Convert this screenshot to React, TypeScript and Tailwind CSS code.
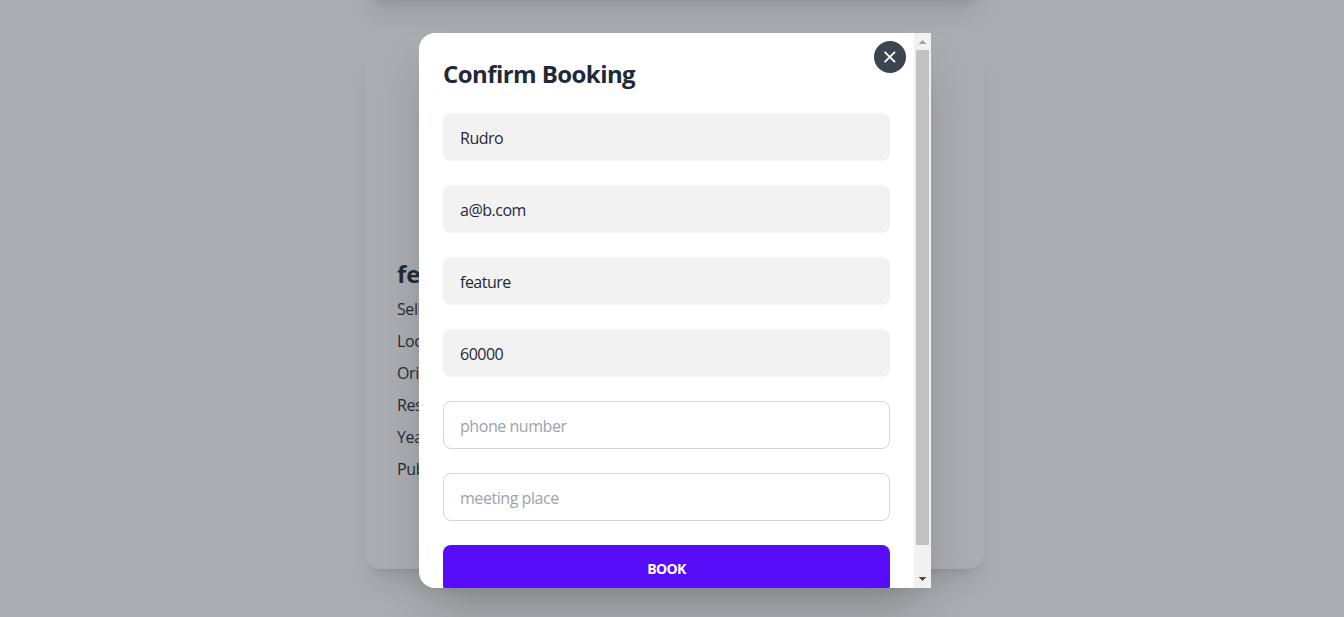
import React from "react";

const fieldBase =
  "block h-12 w-full rounded-lg px-4 pt-px text-[16px] outline-none border text-[#1f2937]";

function Field({ value, placeholder }: { value?: string; placeholder?: string }) {
  return value ? (
    <input
      readOnly
      value={value}
      className={`${fieldBase} border-[#f2f2f2] bg-[#f2f2f2] tracking-[-0.5px]`}
    />
  ) : (
    <input
      placeholder={placeholder}
      className={`${fieldBase} border-[#d2d4d7] bg-white tracking-[-0.45px] placeholder:text-[#9ca3af]`}
    />
  );
}

function Scrollbar() {
  return (
    <div className="flex w-[17px] shrink-0 flex-col items-center bg-[#f1f1f1]">
      <div className="flex h-[17px] w-full items-center justify-center">
        <svg width="7" height="4" viewBox="0 0 7 4" shapeRendering="crispEdges">
          <path d="M3 0h1v1h1v1h1v1h1v1H0V3h1V2h1V1h1z" fill="#a3a3a3" />
        </svg>
      </div>
      <div className="h-[495px] w-[13px] bg-[#c1c1c1]" />
      <div className="mt-auto flex h-[19px] w-full items-center justify-center">
        <svg width="7" height="4" viewBox="0 0 7 4" shapeRendering="crispEdges">
          <path d="M0 0h7v1H6v1H5v1H4v1H3V3H2V2H1V1H0z" fill="#505050" />
        </svg>
      </div>
    </div>
  );
}

const details = ["Seller: Rudro", "Location: Dhaka", "Original Price", "Resale Price", "Year of use", "Published"];
const locked = ["Rudro", "a@b.com", "feature", "60000"];
const open = ["phone number", "meeting place"];

export default function App() {
  return (
    <div className="relative h-[617px] overflow-hidden bg-white font-['Open_Sans','Noto_Sans',sans-serif] text-[#1f2937]">
      <div className="flex h-[617px] flex-col items-center justify-end gap-12 pb-12 pl-[5px]">
        <div className="h-[521px] w-[619px] shrink-0 rounded-2xl shadow-xl" />
        <div className="flex h-[521px] w-[619px] shrink-0 flex-col justify-end gap-[3px] rounded-2xl px-8 pb-[84px] shadow-xl">
          <h2 className="text-[24px] leading-8 font-bold tracking-[-0.1px]">feature</h2>
          <div className="text-[16px] leading-8 tracking-[-0.4px]">
            {details.map((d) => (
              <p key={d}>{d}</p>
            ))}
          </div>
        </div>
      </div>

      <div className="absolute inset-0 flex items-start justify-center bg-[#2a323c]/40 pt-[33px] pl-[6px]">
        <div className="flex h-[555px] w-[512px] overflow-hidden rounded-l-2xl bg-white shadow-2xl">
          <div className="relative flex-1 overflow-hidden px-6 pt-6">
            <button className="absolute top-2 right-2 flex size-8 items-center justify-center rounded-full bg-[#3d4451]">
              <svg width="13" height="12" viewBox="0 0 13 12" stroke="white" strokeWidth="1.9" fill="none">
                <path d="M0.6 0.8L11 11.2M11 0.8L0.6 11.2" />
              </svg>
            </button>
            <h3 className="text-[24px] leading-[34px] font-bold tracking-[-0.57px]">Confirm Booking</h3>
            <form className="flex flex-col gap-6 pt-[22px]">
              {locked.map((v) => (
                <Field key={v} value={v} />
              ))}
              {open.map((p) => (
                <Field key={p} placeholder={p} />
              ))}
              <button
                type="button"
                className="h-12 w-full rounded-lg bg-[#570df8] pb-0.5 text-[14px] font-bold tracking-[-0.6px] text-white"
              >
                BOOK
              </button>
            </form>
          </div>
          <Scrollbar />
        </div>
      </div>
    </div>
  );
}
